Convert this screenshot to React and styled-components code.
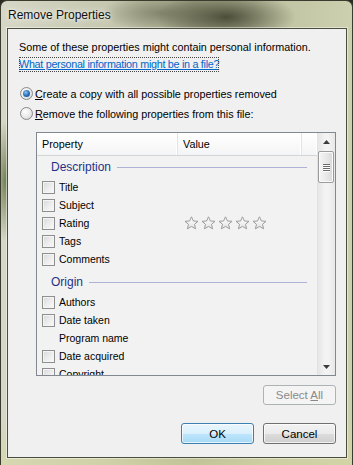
import React from "react"
import styled, { createGlobalStyle } from "styled-components"

const Global = createGlobalStyle`
  html, body {
    margin: 0;
    padding: 0;
    background: #2a2c22;
  }
  body {
    font-family: "Liberation Sans", Arial, sans-serif;
    font-size: 10.8px;
    color: #000;
  }
`

const Frame = styled.div`
  width: 353px;
  height: 465px;
  box-sizing: border-box;
  display: flex;
  flex-direction: column;
  padding: 0 5px 7px 6px;
  border: 1px solid #3a3d2e;
  border-bottom: none;
  border-radius: 7px 7px 0 0;
  background:
    radial-gradient(ellipse 70px 26px at 225px 16px, rgba(70, 72, 52, 0.95), rgba(70, 72, 52, 0) 100%),
    radial-gradient(ellipse 10px 60px at 4px 180px, rgba(90, 110, 60, 0.8), rgba(90, 110, 60, 0) 100%),
    radial-gradient(ellipse 60px 18px at 160px 12px, rgba(120, 122, 98, 0.8), rgba(120, 122, 98, 0) 100%),
    linear-gradient(180deg, rgba(255, 255, 255, 0) 0%, rgba(255, 255, 255, 0) 90%, rgba(215, 215, 160, 0.6) 100%),
    linear-gradient(90deg, #d6d7c6 0%, #c6c8b0 30%, #a7aa8c 55%, #bfc2a2 75%, #cdd0ae 100%);
`

const TitleBar = styled.div`
  height: 27px;
  display: flex;
  align-items: center;
  padding-left: 1px;
  font-size: 12px;
  color: #111;
  text-shadow: 0 0 8px rgba(255, 255, 255, 0.9), 0 0 3px rgba(255, 255, 255, 0.8);
`

const Client = styled.div`
  flex: 1;
  display: flex;
  flex-direction: column;
  background: #f0f0f0;
  border: 1px solid #4a4e3c;
  box-shadow: 0 0 0 1px rgba(255, 255, 255, 0.45);
  padding: 10px 10px 11px 11px;
`

const Info = styled.div`
  line-height: 16px;
  white-space: nowrap;
`

const Link = styled.a`
  align-self: flex-start;
  margin-top: 2px;
  line-height: 15px;
  color: #0066cc;
  letter-spacing: -0.3px;
  text-decoration: underline;
  outline: 1px dotted #444;
  outline-offset: -1px;
  white-space: nowrap;
`

const RadioGroup = styled.div`
  margin-top: 12px;
  display: flex;
  flex-direction: column;
  gap: 1px;
`

const RadioRow = styled.label`
  height: 19px;
  display: flex;
  align-items: center;
  gap: 2px;
  padding-left: 1px;
  white-space: nowrap;
`

const RadioDot = styled.span`
  width: 11px;
  height: 11px;
  border-radius: 50%;
  border: 1px solid #8a8a8a;
  background: radial-gradient(circle at 40% 35%, #ffffff 0%, #e8e8e8 55%, #cfcfcf 100%);
  display: flex;
  align-items: center;
  justify-content: center;

  &::after {
    content: "";
    display: ${(p) => (p.$checked ? "block" : "none")};
    width: 7px;
    height: 7px;
    border-radius: 50%;
    background: radial-gradient(circle at 40% 35%, #8fc4f0 0%, #2b72b8 50%, #0e4a8a 100%);
  }
`

const ListBox = styled.div`
  margin: 9px 0 0 17px;
  height: 244px;
  box-sizing: border-box;
  border: 1px solid #828790;
  background: #f2f2f2;
  display: flex;
  overflow: hidden;
`

const ListMain = styled.div`
  flex: 1;
  display: flex;
  flex-direction: column;
  overflow: hidden;
`

const Header = styled.div`
  height: 22px;
  flex-shrink: 0;
  display: grid;
  grid-template-columns: 141px 124px 1fr;
  border-bottom: 1px solid #d5d5d5;
  background: linear-gradient(180deg, #ffffff 0%, #fafafa 50%, #f3f4f6 100%);
`

const HeaderCell = styled.div`
  display: flex;
  align-items: center;
  padding-left: 5px;
  border-right: 1px solid #e2e4e8;
  box-shadow: inset -1px 0 0 #fff;

  &:last-child {
    border-right: none;
  }
`

const Body = styled.div`
  flex: 1;
  overflow: hidden;
  font-size: 10.5px;
`

const GroupRow = styled.div`
  height: 22px;
  margin-top: ${(p) => (p.$first ? "0" : "3px")};
  display: flex;
  align-items: center;
  padding: 0 10px 0 14px;
  color: #1e3287;
  font-size: 12px;

  &::after {
    content: "";
    flex: 1;
    height: 1px;
    margin-left: 6px;
    background: #aeb2d6;
  }
`

const ItemRow = styled.div`
  height: 18px;
  display: grid;
  grid-template-columns: 141px 1fr;
  align-items: center;
`

const ItemName = styled.div`
  display: flex;
  align-items: center;
  gap: 4px;
  padding-left: 5px;
  white-space: nowrap;
`

const Check = styled.span`
  width: 11px;
  height: 11px;
  flex-shrink: 0;
  border: 1px solid #8f8f8f;
  background: linear-gradient(135deg, #d8d8d8 0%, #ececec 50%, #fafafa 100%);
  box-shadow: inset 0 0 0 1px #f4f4f4;
  visibility: ${(p) => (p.$blank ? "hidden" : "visible")};
`

const Stars = styled.div`
  display: flex;
  gap: 2px;
  padding-left: 6px;
`

const ScrollBar = styled.div`
  width: 17px;
  flex-shrink: 0;
  display: flex;
  flex-direction: column;
  background: linear-gradient(90deg, #e6e6e6 0%, #f3f3f3 40%, #f3f3f3 60%, #e8e8e8 100%);
  border-left: 1px solid #e2e2e2;
`

const ScrollArrow = styled.div`
  height: 17px;
  display: flex;
  align-items: center;
  justify-content: center;
`

const Thumb = styled.div`
  margin: 1px 1px 0 0;
  height: 30px;
  border: 1px solid #9b9b9b;
  border-radius: 2px;
  background: linear-gradient(90deg, #f5f5f5 0%, #e9e9e9 50%, #d9d9d9 100%);
  box-shadow: inset 0 0 0 1px #fbfbfb;
  display: flex;
  flex-direction: column;
  align-items: center;
  justify-content: center;
  gap: 1px;
`

const Grip = styled.span`
  width: 7px;
  height: 1px;
  background: #6b6b6b;
  box-shadow: 0 1px 0 #fff;
`

const Track = styled.div`
  flex: 1;
`

const ButtonRow = styled.div`
  margin-top: ${(p) => p.$gap}px;
  display: flex;
  justify-content: flex-end;
  gap: 9px;
`

const Button = styled.button`
  width: 73px;
  height: ${(p) => (p.$short ? 20 : 21)}px;
  font-family: inherit;
  font-size: 11.5px;
  padding: 0;
  border-radius: 3px;
  border: 1px solid ${(p) => (p.disabled ? "#adb2b5" : p.$primary ? "#3c7fb1" : "#707070")};
  color: ${(p) => (p.disabled ? "#8a8a8a" : "#000")};
  background: ${(p) =>
    p.disabled
      ? "#f4f4f4"
      : p.$primary
      ? "linear-gradient(180deg, #eaf6fd 0%, #d9f0fc 50%, #bee6fd 51%, #a7d9f5 100%)"
      : "linear-gradient(180deg, #f2f2f2 0%, #ebebeb 50%, #dddddd 51%, #cfcfcf 100%)"};
  box-shadow: ${(p) => (p.disabled ? "none" : "inset 0 0 0 1px rgba(255,255,255,0.7)")};
`

const Star = () => (
  <svg width="15" height="14" viewBox="0 0 15 14">
    <defs>
      <linearGradient id="sg" x1="0" y1="0" x2="0" y2="1">
        <stop offset="0" stopColor="#ffffff" />
        <stop offset="1" stopColor="#e4e4e4" />
      </linearGradient>
    </defs>
    <path
      d="M7.5 0.8 L9.4 5 L14 5.3 L10.5 8.3 L11.6 12.8 L7.5 10.4 L3.4 12.8 L4.5 8.3 L1 5.3 L5.6 5 Z"
      fill="url(#sg)"
      stroke="#9c9c9c"
      strokeWidth="1"
      strokeLinejoin="round"
    />
  </svg>
)

const Arrow = ({ down }) => (
  <svg width="7" height="4" viewBox="0 0 7 4">
    <path d={down ? "M0 0 H7 L3.5 4 Z" : "M0 4 H7 L3.5 0 Z"} fill="#3c3c3c" />
  </svg>
)

const items = [
  { group: "Description" },
  { name: "Title" },
  { name: "Subject" },
  { name: "Rating", stars: true },
  { name: "Tags" },
  { name: "Comments" },
  { group: "Origin" },
  { name: "Authors" },
  { name: "Date taken" },
  { name: "Program name", noCheck: true },
  { name: "Date acquired" },
  { name: "Copyright" },
]

export default function App() {
  return (
    <>
      <Global />
      <Frame>
        <TitleBar>Remove Properties</TitleBar>
        <Client>
          <Info>Some of these properties might contain personal information.</Info>
          <Link>What personal information might be in a file?</Link>
          <RadioGroup>
            <RadioRow>
              <RadioDot $checked />
              <span>
                <u>C</u>reate a copy with all possible properties removed
              </span>
            </RadioRow>
            <RadioRow>
              <RadioDot />
              <span>
                <u>R</u>emove the following properties from this file:
              </span>
            </RadioRow>
          </RadioGroup>
          <ListBox>
            <ListMain>
              <Header>
                <HeaderCell>Property</HeaderCell>
                <HeaderCell>Value</HeaderCell>
                <HeaderCell />
              </Header>
              <Body>
                {items.map((it, i) =>
                  it.group ? (
                    <GroupRow key={i} $first={i === 0}>
                      {it.group}
                    </GroupRow>
                  ) : (
                    <ItemRow key={i}>
                      <ItemName>
                        <Check $blank={it.noCheck} />
                        {it.name}
                      </ItemName>
                      {it.stars ? (
                        <Stars>
                          {[0, 1, 2, 3, 4].map((s) => (
                            <Star key={s} />
                          ))}
                        </Stars>
                      ) : (
                        <span />
                      )}
                    </ItemRow>
                  )
                )}
              </Body>
            </ListMain>
            <ScrollBar>
              <ScrollArrow>
                <Arrow />
              </ScrollArrow>
              <Thumb>
                <Grip />
                <Grip />
                <Grip />
                <Grip />
              </Thumb>
              <Track />
              <ScrollArrow>
                <Arrow down />
              </ScrollArrow>
            </ScrollBar>
          </ListBox>
          <ButtonRow $gap={9}>
            <Button $short disabled>
              Select <u>A</u>ll
            </Button>
          </ButtonRow>
          <ButtonRow $gap={18}>
            <Button $primary>OK</Button>
            <Button>Cancel</Button>
          </ButtonRow>
        </Client>
      </Frame>
    </>
  )
}
